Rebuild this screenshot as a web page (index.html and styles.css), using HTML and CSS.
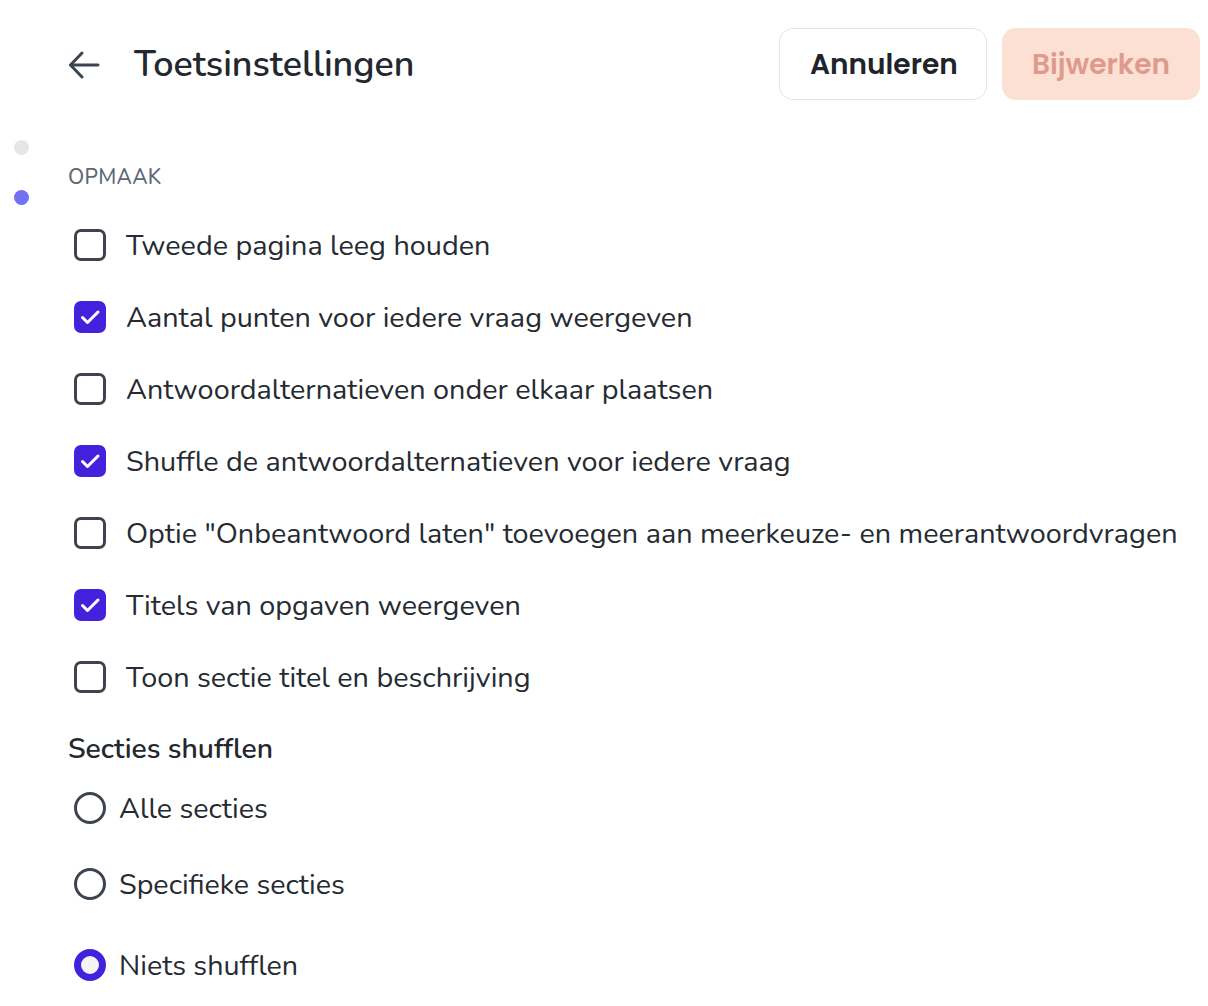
FILE: index.html
```html
<!DOCTYPE html>
<html lang="nl">
<head>
<meta charset="utf-8">
<title>Toetsinstellingen</title>
<link rel="stylesheet" href="styles.css">
</head>
<body>
<div class="page">
  <aside class="rail">
    <span class="dot dot-idle"></span>
    <span class="dot dot-active"></span>
  </aside>
  <header class="topbar">
    <div class="title-group">
      <button class="back" aria-label="Terug">
        <svg width="32" height="28" viewBox="0 0 32 28" fill="none" stroke="#3c444e" stroke-width="3" stroke-linecap="round" stroke-linejoin="round">
          <path d="M30 14H3"/>
          <path d="M14 2L2.5 14L14 26"/>
        </svg>
      </button>
      <h1 class="title">Toetsinstellingen</h1>
    </div>
    <div class="actions">
      <button class="btn btn-cancel">Annuleren</button>
      <button class="btn btn-primary">Bijwerken</button>
    </div>
  </header>
  <main class="content">
    <h2 class="section-label">OPMAAK</h2>
    <ul class="options">
      <li class="option"><span class="checkbox"></span><span>Tweede pagina leeg houden</span></li>
      <li class="option"><span class="checkbox checked"><svg viewBox="0 0 32 32" width="32" height="32" fill="none" stroke="#fff" stroke-width="3" stroke-linecap="round" stroke-linejoin="round"><path d="M8.5 16.5l5 5L24 11"/></svg></span><span>Aantal punten voor iedere vraag weergeven</span></li>
      <li class="option"><span class="checkbox"></span><span>Antwoordalternatieven onder elkaar plaatsen</span></li>
      <li class="option"><span class="checkbox checked"><svg viewBox="0 0 32 32" width="32" height="32" fill="none" stroke="#fff" stroke-width="3" stroke-linecap="round" stroke-linejoin="round"><path d="M8.5 16.5l5 5L24 11"/></svg></span><span>Shuffle de antwoordalternatieven voor iedere vraag</span></li>
      <li class="option"><span class="checkbox"></span><span>Optie "Onbeantwoord laten" toevoegen aan meerkeuze- en meerantwoordvragen</span></li>
      <li class="option"><span class="checkbox checked"><svg viewBox="0 0 32 32" width="32" height="32" fill="none" stroke="#fff" stroke-width="3" stroke-linecap="round" stroke-linejoin="round"><path d="M8.5 16.5l5 5L24 11"/></svg></span><span>Titels van opgaven weergeven</span></li>
      <li class="option"><span class="checkbox"></span><span>Toon sectie titel en beschrijving</span></li>
    </ul>
    <h3 class="group-title">Secties shufflen</h3>
    <ul class="radios">
      <li class="radio-row"><span class="radio"></span><span>Alle secties</span></li>
      <li class="radio-row"><span class="radio"></span><span>Specifieke secties</span></li>
      <li class="radio-row last"><span class="radio selected"></span><span>Niets shufflen</span></li>
    </ul>
  </main>
</div>
</body>
</html>
```
FILE: styles.css
```css
* { box-sizing: border-box; }
html, body { margin: 0; padding: 0; background: #fff; }
body {
  font-family: "Nunito", Lato, "Noto Sans", sans-serif;
  color: #252a31;
  width: 1208px;
  height: 1006px;
  overflow: hidden;
}
.page { position: relative; padding: 28px 8px 0 68px; }
.rail {
  position: absolute;
  left: 14px;
  top: 140px;
  display: flex;
  flex-direction: column;
  gap: 35px;
}
.dot { display: block; width: 15px; height: 15px; border-radius: 50%; }
.dot-idle { background: #e6e6e6; }
.dot-active { background: #7271f3; }

.topbar { display: flex; justify-content: space-between; align-items: center; height: 72px; }
.title-group { display: flex; align-items: center; gap: 34px; }
.back { border: 0; background: none; padding: 0; display: flex; width: 32px; height: 28px; margin-top: 2px; }
.title { margin: 0; font-size: 35.9px; font-weight: 600; letter-spacing: 0; color: #23272e; }
.actions { display: flex; gap: 15px; }
.btn {
  height: 72px;
  border-radius: 14px;
  font-family: "Poppins", "Open Sans", sans-serif;
  font-size: 28px;
  font-weight: 600;
  padding: 2px 30px 0;
}
.btn-cancel { width: 208px; background: #fff; border: 1.5px solid #e3e5e8; color: #1f232a; }
.btn-primary { width: 198px; background: #fbe0d3; border: 0; color: #df9a8e; }

.content { padding-top: 64px; }
.section-label { margin: 0; font-size: 21px; font-weight: 500; color: #5d6876; letter-spacing: 0.3px; line-height: 26px; }
.options { list-style: none; margin: 39px 0 0; padding: 0 0 0 6px; display: flex; flex-direction: column; gap: 40px; }
.option { display: flex; align-items: center; gap: 20px; font-size: 28.8px; height: 32px; color: #262b32; }
.checkbox {
  flex: none;
  width: 32px; height: 32px;
  border: 3px solid #3d444e;
  border-radius: 7px;
  display: flex;
}
.checkbox.checked { background: #4422dc; border-color: #4422dc; }
.checkbox.checked svg { margin: -3px; }

.group-title { margin: 40px 0 0; font-size: 28.3px; font-weight: 600; color: #23272e; line-height: 32px; }
.radios { list-style: none; margin: 27px 0 0; padding: 0 0 0 6px; display: flex; flex-direction: column; gap: 44px; }
.radio-row { display: flex; align-items: center; gap: 13px; font-size: 28.7px; height: 32px; color: #262b32; }
.radio-row.last { margin-top: 5px; }
.radio {
  flex: none;
  width: 32px; height: 32px;
  border: 3px solid #3d444e;
  border-radius: 50%;
}
.radio.selected { border: 7px solid #4422dc; background: #f3f4f6; }
```
